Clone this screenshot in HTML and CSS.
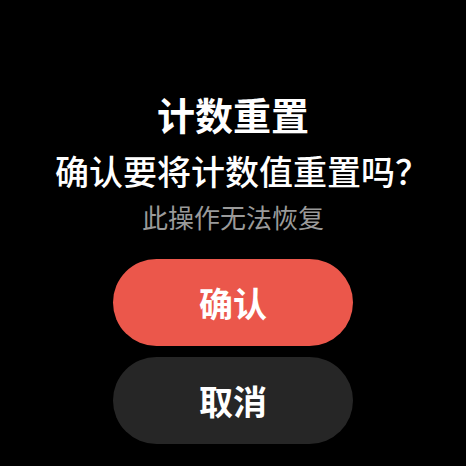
FILE: index.html
```html
<!DOCTYPE html>
<html lang="zh-CN">
<head>
<meta charset="utf-8">
<link rel="stylesheet" href="styles.css">
</head>
<body>
<main class="dialog">
  <h1 class="title">计数重置</h1>
  <p class="message">确认要将计数值重置吗？</p>
  <p class="hint">此操作无法恢复</p>
  <div class="actions">
    <button class="btn btn-confirm">确认</button>
    <button class="btn btn-cancel">取消</button>
  </div>
</main>
</body>
</html>
```

FILE: styles.css
```css
html, body {
  margin: 0;
  padding: 0;
  background: #000;
  width: 466px;
  height: 466px;
  overflow: hidden;
}
body {
  font-family: "Noto Sans CJK SC", "Noto Sans", sans-serif;
  color: #fff;
}
.dialog {
  display: flex;
  flex-direction: column;
  align-items: center;
  padding-top: 92px;
}
.title {
  margin: 0;
  font-size: 38px;
  font-weight: 700;
  line-height: 44px;
}
.message {
  margin: 15px 0 0;
  padding-left: 18px;
  font-size: 34px;
  font-weight: 500;
  line-height: 40px;
  white-space: nowrap;
}
.hint {
  margin: 11px 0 0;
  font-size: 26px;
  font-weight: 400;
  line-height: 30px;
  color: #9a9a9a;
}
.actions {
  margin-top: 27px;
  display: flex;
  flex-direction: column;
  gap: 11px;
}
.btn {
  width: 240px;
  height: 87px;
  border: none;
  border-radius: 44px;
  font-family: inherit;
  font-size: 34px;
  font-weight: 700;
  color: #fff;
  padding: 0;
}
.btn-confirm { background: #eb574b; }
.btn-cancel { background: #262626; }
```
